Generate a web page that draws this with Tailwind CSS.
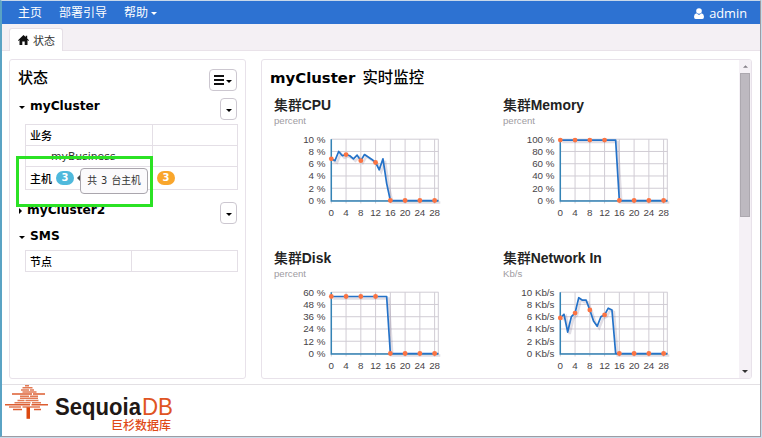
<!DOCTYPE html>
<html lang="zh-CN">
<head>
<meta charset="utf-8">
<title>SequoiaDB</title>
<script src="https://cdn.jsdelivr.net/npm/@tailwindcss/browser@4"></script>
</head>
<body class="w-[762px] h-[438px] overflow-hidden bg-[#c9dcea] font-['Noto_Sans','Noto_Sans_CJK_SC',sans-serif] text-black">
<div class="flex h-[437px] w-[761px] flex-col border-t border-r border-b border-l-2 border-t-[#c8d8ea] border-r-[#9c9ca4] border-b-[#9c9ca4] border-l-[#5aa3c4] bg-white">
  <nav class="flex h-[23px] shrink-0 items-center bg-[#2d72d2] pl-4 pr-[13px] pt-px text-[12px] leading-none text-white">
    <span class="w-[41px]">主页</span>
    <span class="w-[65px]">部署引导</span>
    <span>帮助</span>
    <svg class="ml-[3px] mt-px h-[3px] w-[6px]" viewBox="0 0 6 3"><path d="M0 0h6L3 3z" fill="#fff"/></svg>
    <svg class="ml-auto mr-[5px] h-[11px] w-[10px]" viewBox="0 0 10 11" fill="#fff"><circle cx="5" cy="3" r="2.8"/><path d="M2.3 5.3 5 7l2.7-1.7Q10 6 10 8.8 10 11 8.3 11H1.7Q0 11 0 8.8 0 6 2.3 5.3z"/></svg>
    <span class="font-['Open_Sans'] text-[12.8px] font-medium">admin</span>
  </nav>
  <div class="flex h-[27px] shrink-0 items-end border-b border-[#e9e2e9] bg-[#f4f0f4] pl-[7px]">
    <div class="-mb-px flex h-[23px] w-[54px] items-center rounded-t-[3px] border border-b-0 border-[#e5dfe6] bg-white pl-2 text-[11px] leading-none text-[#333]">
      <svg class="mr-1 h-[10px] w-[11px] shrink-0" viewBox="0 0 11 10" fill="#111"><path d="M5.5 0 7.7 2V.8h1.5v2.6L11 5.2l-.6.7-.9-.8V10H6.7V6.6H4.3V10H1.5V5.1l-.9.8L0 5.2z"/></svg>
      <span class="whitespace-nowrap">状态</span>
    </div>
  </div>
  <main class="flex flex-1 gap-[15px] pl-[7px] pr-[8px] pt-2 pb-[5px]">
    <section class="h-[320px] w-[237px] rounded-[3px] border border-[#e8e2ea] pl-[9px] pr-2 pt-[9px]">
      <div class="flex h-[29px] items-start justify-between">
        <h2 class="-ml-px text-[15px] font-medium leading-[16px]">状态</h2>
        <button class="flex h-[22px] w-[28px] items-center justify-center gap-[2px] rounded-[4px] border border-[#ccc7d0]">
          <svg class="h-[10px] w-[10px]" viewBox="0 0 10 10" fill="#111"><path d="M0 0h10v2H0zM0 4h10v2H0zM0 8h10v2H0z"/></svg>
          <svg class="mt-[2px] h-[3px] w-[6px]" viewBox="0 0 6 3"><path d="M0 0h6L3 3z"/></svg>
        </button>
      </div>
      <div class="flex h-[26px] items-start">
        <svg class="mt-[8px] h-[3px] w-[6px]" viewBox="0 0 6 3"><path d="M0 0h6L3 3z"/></svg>
        <h3 class="ml-[5px] pt-px font-['DejaVu_Sans'] text-[12.2px] font-bold leading-[15px]">myCluster</h3>
        <button class="ml-auto flex h-[22px] w-[17px] items-center justify-center rounded-[4px] border border-[#ccc7d0]"><svg class="mt-[2px] h-[3px] w-[6px]" viewBox="0 0 6 3"><path d="M0 0h6L3 3z"/></svg></button>
      </div>
      <div class="ml-[6px] grid h-[66px] w-[213px] grid-cols-[127px_1fr] grid-rows-[21px_21px_23px] border-l border-t border-[#e4dfe6] text-[11px] font-medium leading-none">
        <div class="flex items-center border-b border-r border-[#e4dfe6] pl-1">业务</div>
        <div class="border-b border-r border-[#e4dfe6]"></div>
        <div class="flex items-center border-b border-r border-[#e4dfe6] pl-[25px] pt-[2px] font-['DejaVu_Sans'] text-[10.8px] font-normal text-[#333]">myBusiness</div>
        <div class="border-b border-r border-[#e4dfe6]"></div>
        <div class="relative flex items-center border-b border-r border-[#e4dfe6] pl-1">主机
          <span class="ml-[4px] flex h-[14px] w-[18px] items-center justify-center rounded-full bg-[#4fb9dc] font-['DejaVu_Sans'] text-[10px] font-bold text-white">3</span>
          <span class="absolute left-[54px] top-px z-20 flex h-[26px] w-[68px] items-center justify-center rounded-[4px] border-[1.5px] border-[#aaa6ad] bg-[#fbfafc] font-['DejaVu_Sans','Noto_Sans_CJK_SC',sans-serif] text-[9.8px] font-normal whitespace-nowrap text-[#333] [word-spacing:1px]">共 3 台主机</span>
          <svg class="absolute left-[51px] top-[8px] z-20 h-[6px] w-[3px]" viewBox="0 0 3 6"><path d="M3 0v6L0 3z" fill="#444"/></svg>
          <span class="absolute -left-[10px] -top-[11px] z-10 h-[51px] w-[137px] border-[3px] border-[#2be224]"></span>
        </div>
        <div class="flex items-center border-b border-r border-[#e4dfe6] pl-[4px]"><span class="flex h-[14px] w-[18px] items-center justify-center rounded-full bg-[#f9a62c] font-['DejaVu_Sans'] text-[10px] font-bold text-white">3</span></div>
      </div>
      <div class="mt-[12px] flex h-[26px] items-start">
        <svg class="mt-[6px] h-[6px] w-[3px]" viewBox="0 0 3 6"><path d="M0 0v6l3-3z"/></svg>
        <h3 class="ml-[5px] pt-px font-['DejaVu_Sans'] text-[12.2px] font-bold leading-[15px]">myCluster2</h3>
        <button class="ml-auto flex h-[22px] w-[17px] items-center justify-center rounded-[4px] border border-[#ccc7d0]"><svg class="mt-[2px] h-[3px] w-[6px]" viewBox="0 0 6 3"><path d="M0 0h6L3 3z"/></svg></button>
      </div>
      <div class="flex h-[22px] items-start">
        <svg class="mt-[8px] h-[3px] w-[6px]" viewBox="0 0 6 3"><path d="M0 0h6L3 3z"/></svg>
        <h3 class="ml-[5px] pt-px font-['DejaVu_Sans'] text-[12.2px] font-bold leading-[15px]">SMS</h3>
      </div>
      <div class="ml-[6px] grid h-[22px] w-[213px] grid-cols-[106px_1fr] border-l border-t border-[#e4dfe6] text-[11px] font-medium leading-none">
        <div class="flex items-center border-b border-r border-[#e4dfe6] pl-1">节点</div>
        <div class="border-b border-r border-[#e4dfe6]"></div>
      </div>
    </section>
    <section class="flex h-[320px] w-[491px] overflow-hidden rounded-[3px] border border-[#e8e2ea]">
      <div class="flex-1 pl-2 pt-[9px]">
        <h2 class="h-[27px] whitespace-nowrap font-['DejaVu_Sans','Noto_Sans_CJK_SC',sans-serif] text-[14.9px] font-bold leading-[18px]">myCluster <span class="ml-[2px] text-[15.4px] font-medium">实时监控</span></h2>
        <div id="charts" class="ml-1 grid grid-cols-[229px_229px] grid-rows-[153px_130px]"></div>
      </div>
      <div class="flex w-[12px] flex-col items-center bg-[#f5f1f6] pt-[5px] pb-[5px]">
        <svg class="h-[3px] w-[5px]" viewBox="0 0 6 3"><path d="M0 3h6L3 0z" fill="#858088"/></svg>
        <div class="mt-[5px] h-[144px] w-[10px] border border-[#aca8af] bg-[#bdb9c0]"></div>
        <svg class="mt-auto h-[3px] w-[6px]" viewBox="0 0 6 3"><path d="M0 0h6L3 3z" fill="#333"/></svg>
      </div>
    </section>
  </main>
  <footer class="h-[52px] shrink-0 border-t border-[#e3e0e4] pl-[3px]">
    <svg class="h-[51px] w-[180px]" viewBox="5 385 180 51">
      <g transform="translate(0 -.7)">
      <g stroke="#e27a54" stroke-width="1.5">
        <path d="M25 386.500h4M22.500 388.500h10M21 390.700h8M30 390.700h4M22.500 392.800h14M20 396.900h9M30 396.900h8M20 399h18M17.500 401.200h7M25.500 401.200h13M14.500 403.400h16M32 403.400h9M9 407.700h12M22.500 407.700h17.500"/>
      </g>
      <path d="M12 394.700h20M33 394.700h12M5 405.500h25M31.500 405.500h16.500M13 410.300h9M34 410.300h7" stroke="#dd5d30" stroke-width="1.500"/>
      <path d="M26.500 408h3.500v11.500h-3.500z" fill="#dc4910"/>
      </g>
      <text x="55" y="415" textLength="86" lengthAdjust="spacingAndGlyphs" class="font-['Liberation_Sans'] text-[24px] font-bold" fill="#211815">Sequoia</text>
      <text x="142" y="415" textLength="31" lengthAdjust="spacingAndGlyphs" class="font-['Liberation_Sans'] text-[24px]" fill="#df5423">DB</text>
      <text x="111" y="429.700" textLength="60" lengthAdjust="spacingAndGlyphs" class="font-['Noto_Sans_CJK_SC'] text-[12px] font-medium" fill="#df4a18">巨杉数据库</text>
    </svg>
  </footer>
</div>
<script>
const zeros = n => Array(n).fill(0);
const charts = [
  {name: 'CPU', unit: 'percent', suffix: ' %', max: 10, data: [6.8,6.5,8,7.3,7.5,7.3,6.8,7.4,6.5,7.5,7.1,6.7,6.2,5,6.8,2.8,...zeros(14)]},
  {name: 'Memory', unit: 'percent', suffix: ' %', max: 100, data: [...Array(16).fill(98.5), ...zeros(14)]},
  {name: 'Disk', unit: 'percent', suffix: ' %', max: 60, data: [...Array(16).fill(55.8), ...zeros(14)]},
  {name: 'Network In', unit: 'Kb/s', suffix: ' Kb/s', max: 10, data: [5.8,6.4,3.5,6,6.6,9.1,8.7,8.7,7.1,5.3,4.45,6,6.3,7.4,7.1,...zeros(15)]}
];
const X = i => 57.3 + i * 3.69, H = 61.3, T = 9.2;
document.getElementById('charts').innerHTML = charts.map(c => {
  const Y = v => T + H - v / c.max * H;
  const pts = c.data.map((v, i) => X(i) + ',' + Y(v)).join(' ');
  let grid = '', labels = '', dots = '';
  for (let i = 0; i <= 5; i++) {
    const y = T + H - i * H / 5;
    grid += `<path d="M57.3 ${y}H164.500"/>`;
    labels += `<text x="51.500" y="${y + 3.5}" text-anchor="end">${c.max / 5 * i}${c.suffix}</text>`;
  }
  for (let i = 0; i <= 28; i += 4) {
    grid += `<path d="M${X(i)} ${T}v${H + 3}"/>`;
    labels += `<text x="${X(i)}" y="85.500" text-anchor="middle">${i}</text>`;
    dots += `<circle cx="${X(i)}" cy="${Y(c.data[i])}" r="2.4"/>`;
  }
  return `<div><h4 class="font-['Liberation_Sans','Noto_Sans_CJK_SC',sans-serif] text-[13.9px] font-bold leading-[18px] h-[18px] whitespace-nowrap text-[#222]"><span class="font-medium">集群</span>${c.name}</h4>
  <p class="h-[16px] font-['Liberation_Sans'] text-[9.6px] leading-[14px] text-[#a09ca2]">${c.unit}</p>
  <svg class="h-[90px] w-[175px] font-['Liberation_Sans'] text-[9.8px]" viewBox="0 0 175 90">
    <g stroke="#d0ccd4" stroke-width="1">${grid}<path d="M164.300 ${T}v${H}"/></g>
    <polyline points="${pts}" transform="translate(2 2)" fill="none" stroke="#78698a" stroke-opacity=".22" stroke-width="2.500"/>
    <path d="M57.300 ${T}V${T + H + .5}H164.500" fill="none" stroke="#3383b5" stroke-width="1.500"/>
    <polyline points="${pts}" fill="none" stroke="#2472c8" stroke-width="1.700" stroke-linejoin="round"/>
    <g fill="#fb7443">${dots}</g><g fill="#484448">${labels}</g>
  </svg></div>`;
}).join('');
</script>
</body>
</html>
